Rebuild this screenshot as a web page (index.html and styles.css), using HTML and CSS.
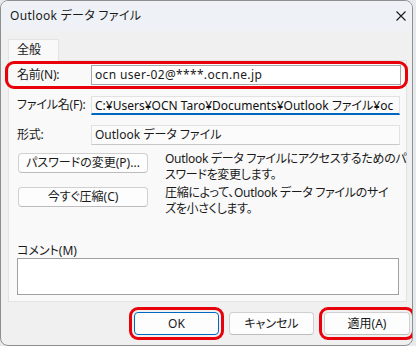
FILE: index.html
```html
<!DOCTYPE html>
<html lang="ja">
<head>
<meta charset="utf-8">
<title>Outlook データ ファイル</title>
<link rel="stylesheet" href="styles.css">
</head>
<body>
<div class="window">
  <div class="titlebar">
    <span class="title">Outlook データ ファイル</span>
    <svg class="close" width="10" height="10" viewBox="0 0 10 10"><path d="M0.5 0.5 L9.5 9.5 M9.5 0.5 L0.5 9.5" stroke="#1b1b1b" stroke-width="1.1" fill="none"/></svg>
  </div>
  <div class="content">
    <div class="tabs"><div class="tab">全般</div></div>
    <div class="panel">
      <div class="row highlight">
        <span class="label">名前(N):</span>
        <div class="field input">ocn user-02@****.ocn.ne.jp</div>
      </div>
      <div class="row">
        <span class="label">ファイル名(F):</span>
        <div class="field path">C:¥Users¥OCN Taro¥Documents¥Outlook ファイル¥oc</div>
      </div>
      <div class="row">
        <span class="label">形式:</span>
        <div class="field readonly">Outlook データ ファイル</div>
      </div>
      <div class="action first">
        <button class="btn wide">パスワードの変更(P)...</button>
        <p class="desc">Outlook データ ファイルにアクセスするためのパ<br>スワードを変更します。</p>
      </div>
      <div class="action">
        <button class="btn wide">今すぐ圧縮(C)</button>
        <p class="desc">圧縮によって、Outlook データ ファイルのサイ<br>ズを小さくします。</p>
      </div>
      <div class="comment-label">コメント(M)</div>
      <div class="comment-box"></div>
    </div>
    <div class="buttons">
      <button class="btn dlg ok marked">OK</button>
      <button class="btn dlg">キャンセル</button>
      <button class="btn dlg apply marked">適用(A)</button>
    </div>
  </div>
</div>
</body>
</html>
```
FILE: styles.css
```css
* { box-sizing: border-box; }
html, body { margin: 0; padding: 0; }
body {
  width: 416px;
  height: 346px;
  background: #e6eaef;
  font-family: "Noto Sans", "Noto Sans CJK JP", sans-serif;
  font-size: 12px;
  color: #1a1a1a;
  font-feature-settings: "palt";
  overflow: hidden;
}
.window {
  width: 413px;
  height: 346px;
  border: 1px solid #8f8f8f;
  border-radius: 8px;
  background: #f0f0f0;
  overflow: hidden;
  display: flex;
  flex-direction: column;
}
.titlebar {
  height: 30px;
  flex: none;
  background: #eef2f7;
  display: flex;
  align-items: center;
  justify-content: space-between;
  padding: 0 6px 0 9px;
}
.title { font-size: 12px; color: #1a1a1a; line-height: 16px; letter-spacing: 0.3px; }
.close { display: block; }
.content {
  padding: 8px 5px 0 7px;
  display: flex;
  flex-direction: column;
}
.tabs { display: flex; height: 21px; position: relative; z-index: 1; }
.tab {
  width: 51px;
  height: 22px;
  background: #f9f9f9;
  border: 1px solid #e3e3e3;
  border-bottom: none;
  padding: 2px 0 0 8px;
  line-height: 16px;
}
.panel {
  height: 242px;
  background: #f9f9f9;
  border: 1px solid #e3e3e3;
  padding: 4px 6px 6px 8px;
  display: flex;
  flex-direction: column;
}
.row {
  display: flex;
  align-items: center;
  height: 20px;
  margin-bottom: 10px;
}
.row:nth-child(3) { margin-bottom: 0; }
.label { width: 74px; flex: none; line-height: 16px; white-space: nowrap; letter-spacing: -0.2px; }
.field {
  flex: 1;
  height: 20px;
  line-height: 17px;
  padding: 0 3px;
  white-space: nowrap;
  overflow: hidden;
}
.input {
  background: #ffffff;
  border: 1px solid #a6a6a6;
  margin-right: -1px;
  letter-spacing: 0.35px;
}
.path {
  background: #fbfbfb;
  border: 1px solid #e2e2e2;
  border-bottom: 2px solid #0067c0;
  height: 19px;
  color: #111;
}
.readonly {
  background: #fbfbfb;
  border: 1px solid #e2e2e2;
  border-bottom-color: #c8c8c8;
}
.highlight { position: relative; }
.highlight::before {
  content: "";
  position: absolute;
  top: -4px;
  bottom: -4px;
  left: -12px;
  right: -8px;
  border: 3px solid #e8000b;
  border-radius: 9px;
  pointer-events: none;
}
.action {
  display: flex;
  align-items: flex-start;
  height: 34px;
}
.action.first { margin-top: 8px; }
.btn {
  font: inherit;
  color: #1a1a1a;
  background: #fdfdfd;
  border: 1px solid #d0d0d0;
  border-bottom-color: #bcbcbc;
  border-radius: 4px;
  padding: 0;
  line-height: 16px;
}
.wide { width: 130px; height: 20px; margin-left: 1px; flex: none; }
.desc {
  margin: -2px 0 0 17px;
  line-height: 16px;
  white-space: nowrap;
  letter-spacing: -0.3px;
}
.comment-label {
  margin-top: 22px;
  height: 15px;
  line-height: 15px;
}
.comment-box {
  width: 382px;
  height: 37px;
  background: #ffffff;
  border: 1px solid #a0a0a0;
}
.buttons {
  display: flex;
  justify-content: flex-end;
  gap: 10px;
  margin-top: 10px;
  margin-right: -3px;
}
.dlg { width: 85px; height: 23px; }
.apply { width: 86px; }
.ok { border: 1px solid #0067c0; }
.marked {
  outline: 3px solid #e8000b;
  outline-offset: 2px;
}
```
